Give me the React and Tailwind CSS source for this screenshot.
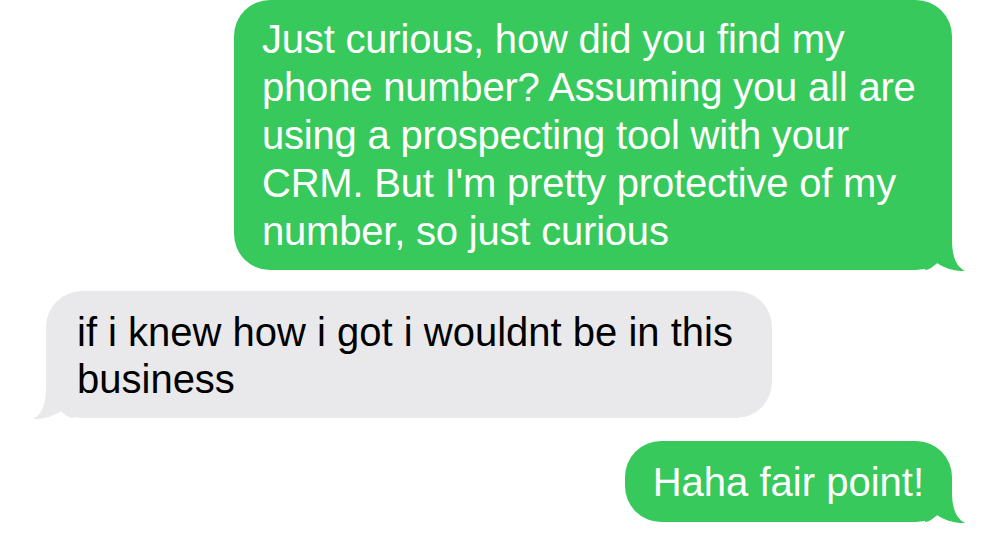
import React from "react";

function Tail({ color, side }) {
  // little hook under the bubble corner
  const pos = side === "right" ? "-right-[13px]" : "-left-[13px] -scale-x-100";
  return (
    <svg
      className={`absolute -bottom-px ${pos}`}
      width="40"
      height="40"
      viewBox="0 0 40 40"
    >
      <path
        d="M0 0 L27 0 L27 8 C27 26 31 35 40 40 C32 40.5 20 38 12 32 C8 36 4 39 0 39 Z"
        fill={color}
      />
    </svg>
  );
}

function Sent({ children, className }) {
  return (
    <div
      className={`relative ml-auto mr-[48px] rounded-[36px] bg-[#38c95c] text-white ${className}`}
    >
      <p className="relative z-10">{children}</p>
      <Tail color="#38c95c" side="right" />
    </div>
  );
}

function Received({ children, className }) {
  return (
    <div
      className={`relative ml-[46px] rounded-[36px] bg-[#e9e9eb] text-black ${className}`}
    >
      <p className="relative z-10">{children}</p>
      <Tail color="#e9e9eb" side="left" />
    </div>
  );
}

export default function App() {
  return (
    <div
      className="w-[1000px] h-[533px] overflow-hidden bg-white flex flex-col text-[40px] leading-[48px]"
      style={{ fontFamily: '"Liberation Sans", Arial, sans-serif' }}
    >
      <Sent className="w-[718px] h-[270px] pt-[15px] pl-[28px] tracking-[-0.2px]">
        Just curious, how did you find my
        <br />
        phone number? Assuming you all are
        <br />
        using a prospecting tool with your
        <br />
        CRM. But I'm pretty protective of my
        <br />
        number, so just curious
      </Sent>

      <Received className="mt-[21px] w-[726px] h-[127px] pt-[18px] pl-[31px] leading-[47px]">
        if i knew how i got i wouldnt be in this
        <br />
        business
      </Received>

      <Sent className="mt-[23px] h-[81px] pt-[17px] px-[28px]">
        Haha fair point!
      </Sent>
    </div>
  );
}
